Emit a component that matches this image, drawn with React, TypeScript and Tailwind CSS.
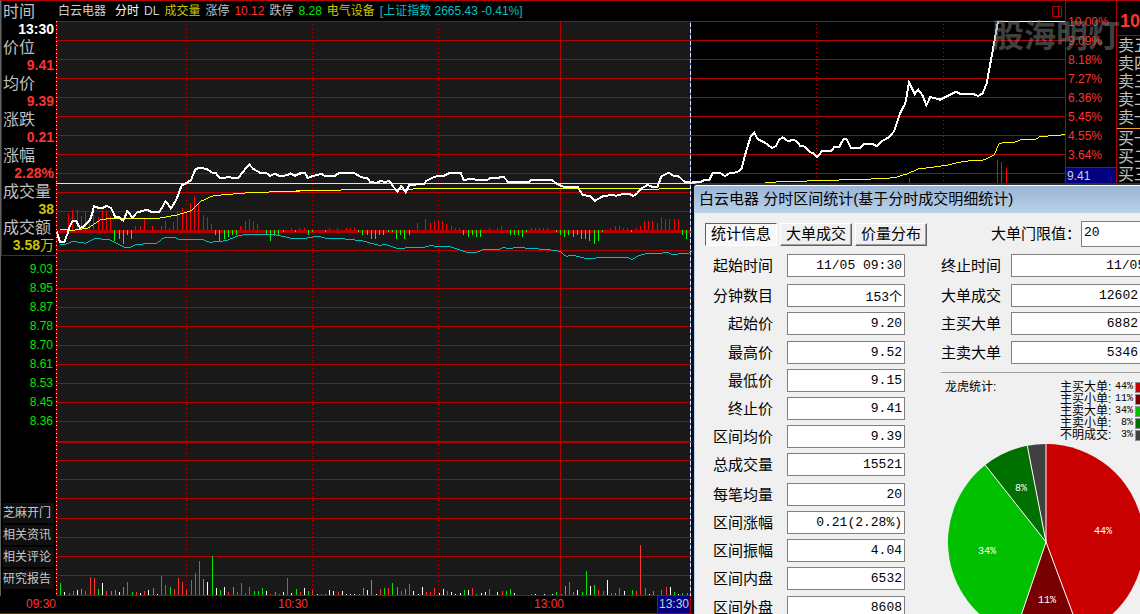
import React from "react";

type Point = [number, number];
type VolumeBar = ["r" | "g" | "w", number, number];

const cjk = "font-['Liberation_Sans','Noto_Sans_CJK_SC',sans-serif]";
const mono = "font-['Liberation_Mono','Noto_Sans_CJK_SC',monospace]";

/* ---------- quote data ---------- */

const cursorInfo = [
  { label: "时间", value: "13:30", tone: "text-white" },
  { label: "价位", value: "9.41", tone: "text-[#ff3232]" },
  { label: "均价", value: "9.39", tone: "text-[#ff3232]" },
  { label: "涨跌", value: "0.21", tone: "text-[#ff3232]" },
  { label: "涨幅", value: "2.28%", tone: "text-[#ff3232]" },
  { label: "成交量", value: "38", tone: "text-[#c6c600]" },
  { label: "成交额", value: "3.58", unit: "万", tone: "text-[#c6c600]" },
];

const lowPrices = ["9.03", "8.95", "8.87", "8.78", "8.70", "8.61", "8.53", "8.45", "8.36"];
const percents = ["10.00%", "9.09%", "8.18%", "7.27%", "6.36%", "5.45%", "4.55%", "3.64%"];
const shortcuts = ["芝麻开门", "相关资讯", "相关评论", "研究报告"];
const asks = ["卖五", "卖四", "卖三", "卖二", "卖一"];
const bids = ["买一", "买二", "买三"];

/* ---------- chart series, three units to a pixel ---------- */

const priceEarly =
  "170,695 180,726 193,726 203,700 207,685 216,665 228,662 240,684 250,680 270,660 277,640 282,618 294,623 310,623 320,617 334,625 345,650 357,652 370,662 382,633 398,653 410,638 440,629 455,636 478,635 487,622 496,605 504,612 512,625 520,615 530,596 545,556 558,550 573,540 586,508 600,503 622,508 634,517 648,520 658,533 675,534 685,530 698,534 715,533 735,508 748,494 760,507 780,518 800,520 811,528 824,521 838,528 860,526 872,520 884,526 900,520";
const priceMid =
  "0,520 15,527 38,518 44,518 54,534 68,528 95,522 104,528 135,527 147,519 193,519 212,531 235,536 241,547 262,548 272,542 285,547 297,542 310,560 322,575 334,558 347,576 358,554 402,553 408,543 435,530 462,527 478,519 512,519 521,540 542,537 565,540 592,540 600,535 622,534 640,530 656,547 715,547 722,541 788,541 800,552 820,560 850,560 864,562 878,585 900,588 914,603 938,589 965,585 980,587 1000,582 1018,582 1030,588 1042,580 1052,567 1072,555 1088,561 1103,560 1114,529 1136,518 1150,527 1165,528 1184,546 1203,548";
const priceLate =
  "0,548 33,545 44,540 58,540 68,519 90,519 105,528 120,519 140,517 154,508 168,455 182,410 193,398 203,417 225,428 246,444 258,438 267,420 278,412 295,424 305,420 318,422 330,437 345,440 360,456 370,460 382,471 396,453 424,452 434,440 447,442 460,418 470,418 483,443 510,443 522,432 548,432 560,438 573,425 598,411 612,394 630,340 646,310 657,248 674,282 685,269 697,285 709,316 721,291 750,299 798,275 812,282 850,282 865,288 878,280 890,250 902,185 915,115 924,63 1127,63";

const averageEarly =
  "180,688 220,691 265,684 300,660 330,655 475,655 530,645 575,632 600,605 640,587 760,577 900,574";
const averageMid = "0,574 36,572 213,569 453,566 1045,566 1055,568 1105,568 1108,566 1200,566";
const averageLate =
  "225,547 290,545 385,542 575,536 615,533 650,522 685,507 770,496 820,484 880,480 912,466 926,433 940,427 978,426 993,419 1040,417 1050,410 1127,404";

const indexEarly =
  "180,733 195,733 220,724 238,727 257,730 285,715 330,720 375,742 390,742 408,733 470,730 494,712 525,712 535,718 605,718 630,727 680,722 710,709 740,703 820,703 870,714 900,716";
const indexMid =
  "0,715 40,717 54,713 85,709 108,715 145,715 215,722 270,737 285,733 320,745 400,742 425,736 440,740 480,740 530,757 560,757 582,748 622,750 640,742 660,747 675,742 775,749 810,754 828,769 850,766 892,777 935,772 1010,772 1027,778 1048,766 1070,761 1120,759 1130,757 1147,763 1195,760 1205,754";

const momentumEarly: Point[] = [
  [206, 641], [218, 629], [232, 629], [244, 648], [256, 636], [269, 668], [281, 642], [295, 652], [307, 629],
  [319, 635], [332, 647], [344, 723], [358, 716], [370, 731], [382, 705], [395, 716], [407, 678], [421, 678],
  [433, 655], [458, 678], [484, 678], [496, 663], [508, 684], [520, 665], [533, 634], [547, 623], [560, 635],
  [571, 609], [584, 588], [596, 610], [610, 645], [622, 651], [634, 672], [646, 705], [658, 723], [673, 716],
  [685, 710], [698, 704], [710, 704], [722, 678], [736, 663], [748, 657], [760, 663], [772, 672], [799, 705],
  [811, 723], [823, 708], [836, 706], [851, 695], [875, 684], [887, 695], [898, 684],
];
const momentumMid: Point[] = [
  [16, 696], [28, 684], [43, 684], [55, 705], [67, 696], [106, 696], [118, 684], [142, 684], [169, 684],
  [181, 684], [193, 684], [205, 696], [217, 705], [232, 705], [244, 716], [256, 716], [268, 705], [280, 705],
  [295, 696], [307, 696], [319, 716], [331, 705], [343, 716], [358, 705], [382, 669], [406, 657], [421, 669],
  [433, 663], [445, 663], [457, 663], [469, 672], [484, 678], [496, 684], [508, 684], [520, 705], [535, 711],
  [547, 705], [559, 711], [571, 711], [598, 684], [622, 684], [634, 678], [661, 705], [673, 705], [685, 705],
  [697, 711], [709, 696], [724, 684], [736, 684], [748, 684], [760, 684], [772, 684], [799, 696], [811, 705],
  [823, 711], [835, 705], [850, 711], [862, 705], [874, 716], [886, 716], [898, 723], [913, 732], [925, 723],
  [937, 696], [962, 684], [976, 678], [988, 678], [1000, 684], [1012, 684], [1024, 696], [1039, 684],
  [1051, 678], [1063, 663], [1075, 663], [1087, 663], [1102, 669], [1114, 651], [1126, 657], [1138, 657],
  [1153, 657], [1165, 657], [1177, 705], [1189, 717],
];
const momentumLate: Point[] = [[658, 534], [922, 480], [934, 486], [949, 504]];

const volumeEarly: VolumeBar[] = [
  ["g", 181, 279], ["w", 193, 306], ["r", 208, 309], ["r", 220, 303], ["w", 232, 300], ["g", 244, 297],
  ["r", 256, 303], ["r", 271, 261], ["r", 283, 264], ["g", 295, 297], ["w", 307, 279], ["r", 319, 303],
  ["g", 334, 303], ["g", 346, 300], ["w", 358, 306], ["g", 370, 291], ["r", 382, 276], ["g", 397, 306],
  ["r", 409, 306], ["w", 421, 309], ["r", 433, 303], ["w", 445, 300], ["g", 460, 294], ["w", 472, 312],
  ["r", 484, 258], ["r", 496, 285], ["g", 511, 291], ["r", 523, 297], ["r", 535, 264], ["r", 547, 276],
  ["r", 560, 300], ["r", 574, 270], ["r", 586, 249], ["r", 598, 213], ["g", 610, 267], ["w", 622, 276],
  ["g", 637, 198], ["w", 649, 294], ["g", 661, 300], ["w", 673, 291], ["r", 685, 306], ["g", 700, 291],
  ["r", 712, 306], ["r", 724, 279], ["r", 736, 309], ["r", 748, 291], ["g", 763, 303], ["g", 775, 303],
  ["g", 787, 294], ["w", 799, 303], ["r", 811, 312], ["g", 826, 306], ["r", 838, 312], ["w", 850, 306],
  ["r", 862, 264], ["w", 874, 309], ["g", 889, 297], ["r", 901, 306], ["w", 913, 294], ["g", 925, 303],
  ["r", 937, 300], ["w", 952, 312], ["r", 964, 312], ["g", 976, 312], ["w", 988, 300], ["w", 1000, 303],
  ["r", 1015, 306], ["w", 1027, 303],
];
const volumeMid: VolumeBar[] = [
  ["w", 19, 312], ["w", 31, 312], ["w", 43, 312], ["g", 58, 312], ["g", 70, 294], ["w", 82, 300],
  ["g", 94, 270], ["w", 109, 312], ["r", 121, 297], ["g", 133, 294], ["r", 145, 294], ["g", 157, 279],
  ["g", 172, 291], ["r", 184, 303], ["g", 196, 297], ["r", 208, 282], ["w", 220, 303], ["w", 235, 312],
  ["w", 247, 291], ["r", 259, 306], ["r", 271, 306], ["r", 283, 294], ["w", 298, 309], ["w", 310, 297],
  ["r", 322, 303], ["w", 334, 306], ["w", 346, 312], ["w", 361, 309], ["g", 373, 300], ["w", 385, 300],
  ["r", 397, 294], ["g", 409, 312], ["w", 424, 309], ["w", 436, 306], ["r", 448, 297], ["w", 472, 306],
  ["r", 487, 303], ["g", 499, 303], ["g", 511, 297], ["w", 523, 309], ["r", 574, 312], ["w", 586, 312],
  ["w", 613, 312], ["w", 637, 312], ["g", 649, 306], ["g", 664, 312], ["g", 676, 288], ["r", 688, 276],
  ["g", 700, 306], ["w", 712, 300], ["g", 727, 306], ["g", 739, 243], ["w", 751, 288], ["g", 763, 285],
  ["r", 775, 300], ["r", 790, 303], ["w", 802, 270], ["r", 814, 309], ["g", 826, 309], ["r", 838, 294],
  ["w", 853, 303], ["g", 877, 300], ["r", 889, 303], ["r", 901, 165], ["r", 916, 294], ["w", 928, 312],
  ["g", 940, 303], ["r", 964, 300], ["r", 979, 291], ["w", 991, 291], ["g", 1003, 306], ["w", 1015, 312],
  ["g", 1027, 309], ["g", 1042, 309],
];

const gridLines = [
  0, 19, 38, 57, 76, 95, 114, 133, 152, 171, 190, 229, 248, 267, 286, 305, 324, 343, 362, 381, 400, 439, 458, 477,
  497, 516, 535, 554,
];
const volumeColors = { r: "#ff3232", g: "#00e600", w: "#ffffff" };

function Momentum({ bars, left, base = 690 }: { bars: Point[]; left: number; base?: number }) {
  return (
    <>
      {bars.map(([x, y]) => (
        <rect
          key={x}
          x={left + Math.floor(x / 3)}
          y={Math.round(Math.min(y, base) / 3) - 21}
          width="1"
          height={Math.round(Math.abs(y - base) / 3)}
          fill={y < base ? "#ff0000" : "#00ff00"}
        />
      ))}
    </>
  );
}

function Volume({ bars, left }: { bars: VolumeBar[]; left: number }) {
  return (
    <>
      {bars.map(([c, x, y]) => (
        <rect
          key={x}
          x={left + Math.floor(x / 3)}
          y={469 + y / 3}
          width="1"
          height={(315 - y) / 3}
          fill={volumeColors[c]}
        />
      ))}
    </>
  );
}

function IntradayChart() {
  return (
    <svg
      className="block h-full w-full"
      viewBox="0 0 1009 575"
      preserveAspectRatio="none"
      role="img"
      aria-label="白云电器 分时"
    >
      <g shapeRendering="crispEdges">
        <rect x="1" y="0" width="634" height="575" fill="#191919" />
        {gridLines.map((y) => (
          <rect key={y} x="1" y={y} width="1008" height="1" fill="#b40000" />
        ))}
        <rect x="1" y="209" width="1008" height="3" fill="#b40000" />
        <rect x="1" y="420" width="1008" height="2" fill="#b40000" />
        <rect x="504" y="0" width="1" height="575" fill="#b40000" />
        <g stroke="#b40000" strokeDasharray="1 3">
          <path d="M130.5 3V574M256.5 3V574M382.5 3V574M760.5 3V574M887.5 3V574" />
        </g>
        <rect x="0" y="0" width="1" height="575" fill="#b40000" />
        <path d="M0.5 0V575" stroke="#ffff60" strokeDasharray="1 3" />
        <rect x="0" y="574" width="1009" height="1" fill="#b40000" />
        <rect x="0" y="162" width="1009" height="1" fill="#e0e0e0" />
        <path d="M634.5 0V575" stroke="#e6e6e6" />
        <path d="M634.5 0V575" stroke="#3c50c8" strokeDasharray="2 4" />
        <Momentum bars={momentumEarly} left={-56} />
        <Momentum bars={momentumMid} left={234} />
        <Momentum bars={momentumLate} left={634} base={600} />
        <Volume bars={volumeEarly} left={-56} />
        <Volume bars={volumeMid} left={284} />
      </g>
      <g fill="none" strokeWidth="3" shapeRendering="crispEdges">
        <g transform="translate(-56 -21) scale(0.33333)">
          <polyline points={indexEarly} stroke="#00c0c0" />
          <polyline points={averageEarly} stroke="#ffff00" />
          <polyline points={priceEarly} stroke="#ffffff" strokeWidth="6" />
        </g>
        <g transform="translate(234 -21) scale(0.33333)">
          <polyline points={indexMid} stroke="#00c0c0" />
          <polyline points={averageMid} stroke="#ffff00" />
          <polyline points={priceMid} stroke="#ffffff" strokeWidth="6" />
        </g>
        <g transform="translate(634 -21) scale(0.33333)">
          <polyline points={averageLate} stroke="#ffff00" />
          <polyline points={priceLate} stroke="#ffffff" strokeWidth="6" />
        </g>
      </g>
    </svg>
  );
}

/* ---------- terminal panels ---------- */

function Sidebar() {
  return (
    <aside className="flex w-14 shrink-0 flex-col border-l border-[#606060]">
      <dl className="border border-r-0 border-[#b40000] pt-0.5">
        {cursorInfo.map((item) => (
          <div key={item.label}>
            <dt className="h-[18px] pl-px text-base leading-[18px] whitespace-nowrap text-[#c0c0c0]">{item.label}</dt>
            <dd className={`h-[18px] pr-0.5 text-right text-sm leading-4 font-bold ${item.tone}`}>
              {item.value}
              {item.unit && <span className="font-normal">{item.unit}</span>}
            </dd>
          </div>
        ))}
      </dl>
      <ul className="mt-1 pr-[3px] text-right text-xs text-[#00e600]">
        {lowPrices.map((price) => (
          <li key={price} className="h-[19px] leading-[19px]">
            {price}
          </li>
        ))}
      </ul>
      <nav className="mt-auto flex flex-col gap-0.5 pr-0.5 pb-[7px] pl-0.5">
        {shortcuts.map((name) => (
          <a key={name} href="#" className="h-5 bg-[#101010] text-xs leading-5 whitespace-nowrap text-[#c8c8c8]">
            {name}
          </a>
        ))}
      </nav>
    </aside>
  );
}

function QuoteHeader() {
  return (
    <header className="flex h-[21px] items-center gap-[5px] border-t border-[#b40000] pl-0.5 text-xs whitespace-nowrap">
      <h1 className="mr-1 text-[#d0d0d0]">白云电器</h1>
      <span className="text-white">分时</span>
      <span className="text-[#d0d0d0]">DL</span>
      <span className="text-[#c6c600]">成交量</span>
      <span className="text-[#c0c0c0]">涨停</span>
      <span className="text-[#ff3232]">10.12</span>
      <span className="text-[#c0c0c0]">跌停</span>
      <span className="text-[#00e600]">8.28</span>
      <span className="text-[#c6c600]">电气设备</span>
      <span className="text-[#00c0c0]">[上证指数 2665.43 -0.41%]</span>
      <svg className="mr-0.5 ml-auto h-[11px] w-[11px]" viewBox="0 0 11 11" fill="none" stroke="#b40000" aria-hidden="true">
        <path d="M.5 .5H9.5V10.5H.5ZM6.5 .5V10.5" />
      </svg>
    </header>
  );
}

function PercentScale() {
  return (
    <div className="flex w-[51px] shrink-0 flex-col border-t border-l border-[#b40000] pt-3">
      <ul className="pl-0.5 text-xs text-[#ff3232]">
        {percents.map((p) => (
          <li key={p} className="h-[19px] leading-[19px]">
            {p}
          </li>
        ))}
      </ul>
      <div className="mt-0.5 h-[17px] border-t border-[#b40000] bg-[#000080] pl-px text-xs leading-4 text-[#d0d0d0]">
        9.41
      </div>
    </div>
  );
}

function OrderBook() {
  return (
    <div className="flex w-6 shrink-0 flex-col overflow-hidden border-t border-l border-[#b40000] text-base leading-[18px] whitespace-nowrap text-[#c0c0c0]">
      <div className="h-[35px] border-b border-[#b40000] pl-[3px] text-lg leading-10 font-bold text-[#ff3232]">10.12</div>
      <ul className="h-[92px] pt-px pl-px">
        {asks.map((a) => (
          <li key={a}>{a}</li>
        ))}
      </ul>
      <ul className="border-t border-[#f0a030] pt-px pl-px">
        {bids.map((b) => (
          <li key={b}>{b}</li>
        ))}
      </ul>
    </div>
  );
}

function TimeAxis() {
  return (
    <div className="flex h-[18px] shrink-0 border-b border-[#b40000] text-xs leading-4 text-[#ff3232]">
      <span className="w-14 text-right">09:30</span>
      <span className="w-[252px] text-right">10:30</span>
      <span className="w-64 text-right">13:00</span>
      <span className="ml-[93px] w-[34px] border-x border-[#b40000] bg-[#000080] text-center text-[#d0d0d0]">
        13:30
      </span>
    </div>
  );
}

/* ---------- range statistics window ---------- */

const stats = [
  { label: "起始时间", value: "11/05 09:30", row: "h-[30px]" },
  { label: "分钟数目", value: "153个", row: "h-7" },
  { label: "起始价", value: "9.20", row: "h-[29px]" },
  { label: "最高价", value: "9.52", row: "h-7" },
  { label: "最低价", value: "9.15", row: "h-7" },
  { label: "终止价", value: "9.41", row: "h-7" },
  { label: "区间均价", value: "9.39", row: "h-7" },
  { label: "总成交量", value: "15521", row: "h-[30px]" },
  { label: "每笔均量", value: "20", row: "h-7" },
  { label: "区间涨幅", value: "0.21(2.28%)", row: "h-7" },
  { label: "区间振幅", value: "4.04", row: "h-7" },
  { label: "区间内盘", value: "6532", row: "h-[29px]" },
  { label: "区间外盘", value: "8608", row: "h-7" },
];

const bigOrders = [
  { label: "终止时间", value: "11/05 13:30", row: "h-[30px]", field: "w-[184px]" },
  { label: "大单成交", value: "12602", row: "h-7", field: "w-[130px]" },
  { label: "主买大单", value: "6882", row: "h-[29px]", field: "w-[130px]" },
  { label: "主卖大单", value: "5346", row: "h-7", field: "w-[130px]" },
];

const slices = [
  { label: "主买大单", share: "44%", color: "#c80000", from: 0, to: 159.5, x: 155, y: 90 },
  { label: "主买小单", share: "11%", color: "#780000", from: 159.5, to: 198.7, x: 99, y: 159 },
  { label: "主卖大单", share: "34%", color: "#00c000", from: 198.7, to: 321.7, x: 39, y: 110 },
  { label: "主卖小单", share: "8%", color: "#007000", from: 321.7, to: 349, x: 73, y: 47 },
  { label: "不明成交", share: "3%", color: "#404040", from: 349, to: 360 },
];

function rim(deg: number) {
  const a = (deg * Math.PI) / 180;
  return `${(98 + 98 * Math.sin(a)).toFixed(2)} ${(98 - 98 * Math.cos(a)).toFixed(2)}`;
}

function Pie() {
  return (
    <svg className="mt-[3px] ml-[7px] block h-[196px] w-[196px]" viewBox="0 0 196 196" role="img" aria-label="龙虎统计">
      {slices.map((s) => (
        <path
          key={s.label}
          d={`M98 98L${rim(s.from)}A98 98 0 0 1 ${rim(s.to)}Z`}
          fill={s.color}
        />
      ))}
      {slices.map((s) => (
        <path key={s.label} d={`M98 98L${rim(s.from)}`} stroke="#ffffff" />
      ))}
      {slices.map(
        (s) =>
          s.x && (
            <text key={s.label} x={s.x} y={s.y} fill="#ffffff" fontSize="10" textAnchor="middle" className={mono}>
              {s.share}
            </text>
          ),
      )}
    </svg>
  );
}

function Field({ id, label, value, width }: { id: string; label: string; value: string; width: string }) {
  return (
    <>
      <label htmlFor={id} className="w-[68px] shrink-0 text-right text-[15px] leading-[23px] whitespace-nowrap">
        {label}
      </label>
      <input
        id={id}
        readOnly
        defaultValue={value}
        className={`h-[23px] shrink-0 border border-[#808080] bg-white pr-0.5 text-right text-[13px] leading-5 ${width} ${mono}`}
      />
    </>
  );
}

function RangeStatsWindow() {
  return (
    <section
      aria-label="分时区间统计"
      className="absolute top-[183px] left-[692px] w-[560px] rounded-tl-md border-2 border-[#101010] border-t-[#303030] bg-[#f0f0f0] text-black"
    >
      <h2 className="flex h-7 items-center rounded-tl border-t border-white bg-linear-to-b from-[#9ab4d2] to-[#b9d1ea] pl-[5px] text-[15px] whitespace-nowrap">
        白云电器 分时区间统计(基于分时成交明细统计)
      </h2>
      <div className="border-l border-[#b9d1ea] pt-2 pl-2.5">
        <div className="flex h-[26px] items-center">
          <div className="flex gap-[3px]">
            <button
              type="button"
              className="h-[23px] w-[72px] border border-t-[#606060] border-r-white border-b-white border-l-[#606060] bg-[#f8f8f8] text-[15px] leading-5"
            >
              统计信息
            </button>
            <button
              type="button"
              className="h-[23px] w-[72px] border border-t-white border-r-[#606060] border-b-[#606060] border-l-white bg-[#f0f0f0] text-[15px] leading-5 shadow-[inset_-1px_-1px_0_#a0a0a0]"
            >
              大单成交
            </button>
            <button
              type="button"
              className="h-[23px] w-[72px] border border-t-white border-r-[#606060] border-b-[#606060] border-l-white bg-[#f0f0f0] text-[15px] leading-5 shadow-[inset_-1px_-1px_0_#a0a0a0]"
            >
              价量分布
            </button>
          </div>
          <label htmlFor="limit" className="ml-16 w-[90px] text-[15px] whitespace-nowrap">
            大单门限值：
          </label>
          <input
            id="limit"
            defaultValue="20"
            className={`h-[26px] w-28 border border-[#808080] bg-white pb-1 pl-0.5 text-[13px] ${mono}`}
          />
        </div>
        <div className="mt-[7px] flex">
          <div className="shrink-0">
            {stats.map((s, i) => (
              <div key={s.label} className={`flex gap-3.5 ${s.row}`}>
                <Field id={`stat-${i}`} label={s.label} value={s.value} width="w-[118px]" />
              </div>
            ))}
          </div>
          <div className="ml-7">
            {bigOrders.map((s, i) => (
              <div key={s.label} className={`flex gap-2.5 ${s.row}`}>
                <Field id={`big-${i}`} label={s.label} value={s.value} width={s.field} />
              </div>
            ))}
            <div className="mt-[3px] ml-2 w-80 border-t border-b border-[#a0a0a0] border-b-white pt-2">
              <div className="flex text-xs leading-3">
                <h3 className="ml-1 w-[115px]">龙虎统计:</h3>
                <ul>
                  {slices.map((s) => (
                    <li key={s.label} className="flex h-3 items-center">
                      <span className="w-[51px] whitespace-nowrap">{s.label}:</span>
                      <span className={`w-[22px] text-right text-[10px] ${mono}`}>{s.share}</span>
                      <svg className="ml-0.5 h-[11px] w-4" viewBox="0 0 16 11" aria-hidden="true">
                        <rect x=".5" y=".5" width="15" height="10" fill={s.color} stroke="#909090" />
                      </svg>
                    </li>
                  ))}
                </ul>
              </div>
              <Pie />
            </div>
          </div>
        </div>
      </div>
    </section>
  );
}

export default function App() {
  return (
    <div className={`relative flex h-screen w-full flex-col overflow-hidden bg-black text-white ${cjk}`}>
      <div className="flex min-h-0 flex-1">
        <Sidebar />
        <main className="flex min-w-0 flex-1 flex-col">
          <QuoteHeader />
          <div className="min-h-0 flex-1">
            <IntradayChart />
          </div>
        </main>
        <PercentScale />
        <OrderBook />
      </div>
      <TimeAxis />
      <div className="pointer-events-none absolute top-3 right-5 text-[32px] leading-[48px] font-bold text-[#808080]/50">
        股海明灯
      </div>
      <RangeStatsWindow />
    </div>
  );
}
